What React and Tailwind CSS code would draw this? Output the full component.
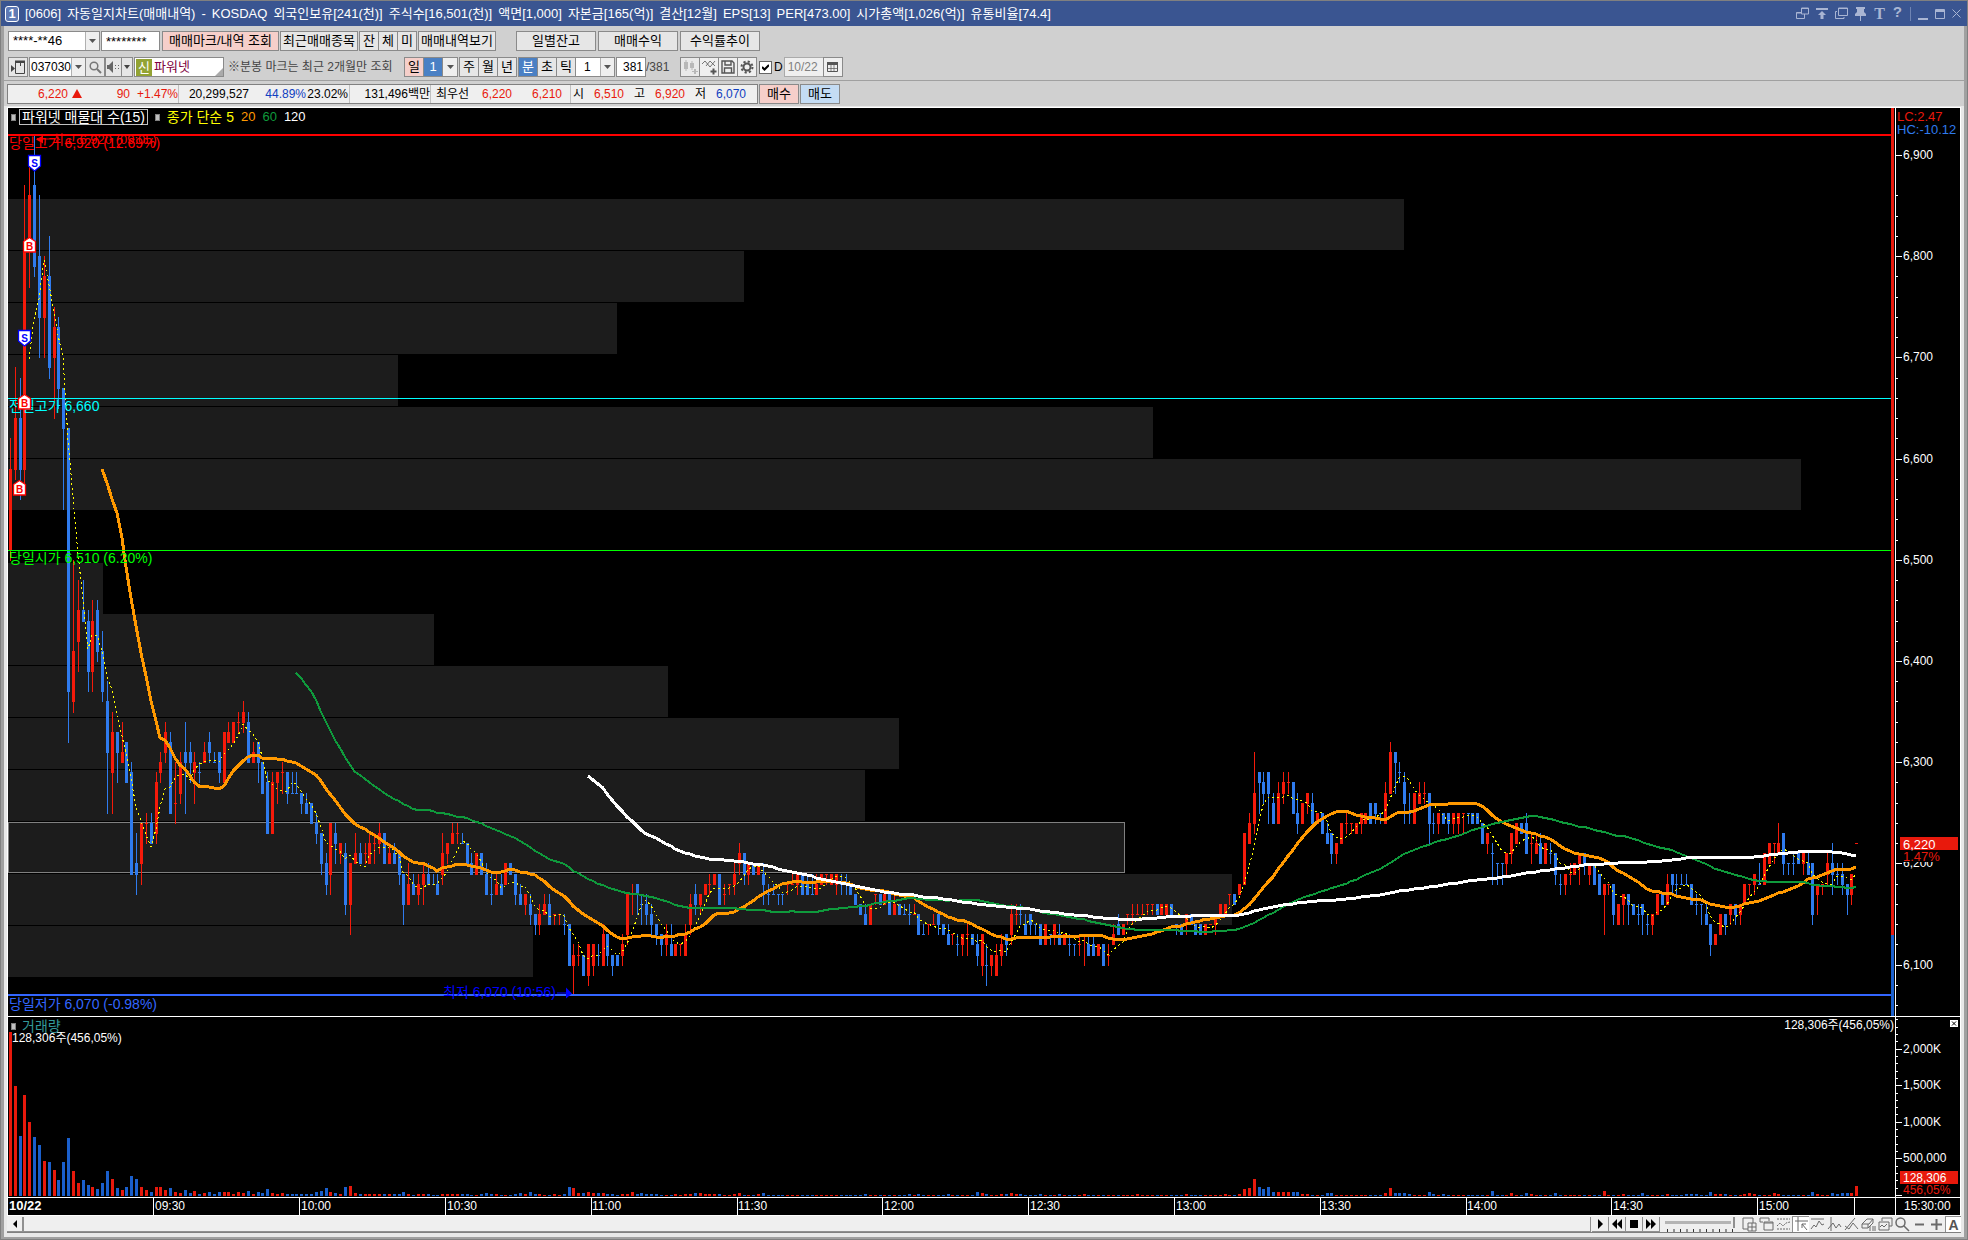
import { useState } from "react";
import clsx from "clsx";

// one minute candles: direction (u/d) + high, body top, body bottom, low in 10 won over 6,000
const CANDLES = `
u62595150 u69645958 d68645956 u87815957 u89868177 d92877978 d86807470 u80787470 d82786968 u75737064
d74736765 d67676355 d63633732 u50413635 u48454239 d48454444 d45443937 u46443937 d46454140 d43413736
d38363125 u35332925 d33333128 u34313030 d32322828 d30291919 d23201917 u24242018 u25242422 d25242222
u29282322 u31302928 u34333130 d33322525 u30262624 u31302726 d34313025 d32313028 u31302926 d30292928
u32313030 d33323130 d31303030 d31312928 u33332828 u34333232 u34343232 u35343433 u36353433 d35343030
u32313030 d32323028 d30302727 d29282323 u29282323 u29292826 u30292927 d29292726 d29272727 d29272727
d27272625 d27262525 d26262424 d25242322 d23232019 d21201817 u24241917 d24232220 u22222120 d22211615
u20201613 u23212020 d22212020 u22212120 u23222020 u23222220 u24232221 d23232020 u22212020 d22212020
d21211918 d19191614 u20181616 d19181717 u19181716 u20191816 d20191818 d19181818 d19181717 u23211918
u22222120 u24232222 u24232322 d23222222 d22222020 d21201919 u21211919 d21211919 d20191717 d19171716
u19181717 d19181717 u20201818 d20201919 d19191716 d18171616 u17171615 d17161514 d15151413 u16151413
u17161515 d17161414 u15151514 u15151514 d15141413 d14141010 u12111007 u12111110 d11110909 u12120908
u12121009 d12111110 u14131010 d13131110 d11111009 d11111010 u13121110 u17171312 u18171715 d18181715
d17161614 d17161514 d16151413 d14141312 d13131211 u14131211 d14121111 u12121111 u12121211 u14131111
u17161413 d18171615 u17171615 u18181717 u19181817 u19191818 d19191616 u18171716 u18181817 u20191817
u22212019 d21211918 u20201918 d20201919 u20201919 d20191816 d18171716 d18171717 d17171716 d17171716
u18181817 u19181818 u19191817 d19191717 d19181717 d19171717 u19181717 u19191818 u19191918 u19191818
u19191817 d19181817 d19181817 d18181717 d17171616 d16161515 d16151414 u16161414 u17171716 d17171616
u17171616 d17171515 u17161515 d16161515 d16151515 d16151514 u16151515 d15151313 d14131313 u14141413
u15141414 d15151413 d14141313 d14131212 u13131312 d13121211 u13131211 u14131311 d13131212 d13121110
u13131009 d12101008 u11111009 u12110909 u13121110 d13131211 u16151312 u16151514 d16151514 d15141313
d15151413 d14141413 d14141212 u14141212 d13131312 u14141312 d14131212 u13131212 d13121211 d12121211
u13121211 u13131310 d13121111 d13121111 u12121111 d12121010 u12111110 u14131212 d15141313 u14141313
u15151514 u16151514 u16151515 u16151515 u16161615 u16161615 d16161515 u16161515 u16161515 d16161515
d14141413 d14141313 u15151413 d15151414 d14141313 d14141313 u14141313 u14141414 u15151413 u16161515
u16161515 u17171716 d17171616 u18181717 u23231818 u25242222 u31272423 d29292825 d29282726 d29292724
d27262424 u28272424 u29282726 u29282827 d28282525 d27252423 u26262424 u27272625 d27262424 u25252424
d25252323 d24232222 d23232120 u22222120 u24242222 u25242423 u24242423 u24242323 u25252423 u25252424
d26262424 d26262524 d25252524 u28272424 u32312727 d31313027 d30292928 d29282624 d27252524 u27272424
u28272626 u28272726 d27272422 d25242423 u25252423 d25252424 d25252423 u25252423 u25252423 u25252523
d25252524 d25252424 d25252424 d24242222 u23232221 d22212118 d20202018 d20202018 u21212019 u23232120
u24242222 d24242323 d25242121 u23222220 u23222121 d23222020 u22222020 d22212120 d21211918 d19181817
u19191817 u20191918 u20201919 u21212018 d21212019 u20201918 d20201818 d19191717 u18181713 u18181817
d18181514 u16161414 u17171614 d17171614 d16161515 d16151514 d16161513 d15141413 u15151413 u17171515
d17171616 u19181616 d19191817 d19181817 d19181818 d19181818 d18181616 d17161615 d16161614 d16151414
d14141211 u13131212 u15151313 d15151413 u16161514 d16161514 u16161514 u18181616 u18181817 u19191817
d20181818 u21211818 u22222020 u22222220 u24222121 d23232019 d20202019 d21202019 d21212020 u21212019
d21201919 d20201514 u18181715 u18181817 u21201918 d22201917 d20191918 d20191817 d18181715 u19191716
u22222222`
  .trim()
  .split(/\s+/)
  .map((s) => ({
    up: s[0] === "u",
    high: +s.slice(1, 3),
    top: +s.slice(3, 5),
    bottom: +s.slice(5, 7),
    low: +s.slice(7, 9),
  }));

// volume in units of 13.6k shares, minutes not listed stay at one unit
const OPENING_VOLUME = [
  164, 110, 60, 101, 74, 59, 51, 35, 34, 26, 16, 34, 58, 25, 13, 16, 11, 9, 7, 13, 25, 17, 8, 6, 9, 20, 17, 9, 6, 4,
  9, 9, 6, 8, 4, 3, 6, 3, 5, 2, 3, 4, 2, 4, 4, 4, 2, 4, 3, 5, 2, 4, 3, 7, 3, 2, 3, 2, 2, 2,
  2, 2, 2, 4, 5, 8, 4, 3, 2, 9, 10, 3, 2, 2, 2, 2, 2, 2, 2, 2, 2, 4, 2, 1, 2, 2, 2, 1, 1, 2,
  2, 2, 2, 2, 2, 1, 1, 2, 3, 2, 2, 1, 1, 1, 2, 3, 2, 4, 2, 2, 1, 1, 2, 1, 2, 9, 8, 3, 3, 4,
  3, 3, 3, 2, 2, 1, 2, 2, 4, 2, 3, 2, 2, 2, 1, 1, 1, 2, 1, 2, 2, 3, 3, 2, 2, 2, 2, 1, 1, 2, 3,
];
const VOLUME_SPIKES = {
  154: 2, 155: 3, 176: 2, 185: 2, 187: 2, 193: 2, 199: 4, 200: 3, 201: 2, 204: 2, 205: 2, 206: 3, 207: 2, 208: 2,
  212: 2, 216: 2, 221: 2, 232: 2, 242: 2, 250: 2, 253: 2, 254: 7, 255: 8, 256: 17, 257: 9, 258: 7, 259: 9, 260: 4,
  261: 4, 262: 4, 263: 4, 264: 4, 265: 4, 266: 2, 267: 2, 271: 3, 272: 3, 283: 3, 284: 8, 285: 3, 286: 3, 287: 3,
  288: 2, 292: 4, 293: 2, 295: 2, 305: 5, 309: 3, 312: 3, 313: 2, 318: 3, 328: 5, 332: 2, 336: 3, 341: 2, 345: 2,
  346: 2, 347: 2, 350: 4, 351: 2, 352: 2, 353: 2, 357: 2, 358: 3, 359: 2, 363: 3, 364: 2, 371: 4, 372: 2, 375: 3,
  376: 2, 377: 3, 378: 3, 379: 3, 380: 10,
};

const PROFILE = [1396, 736, 609, 390, 1145, 1793, 0, 95, 426, 660, 891, 857, 1116, 1224, 525];
const PROFILE_CURRENT = 12;
const HOURS = ["09:30", "10:00", "10:30", "11:00", "11:30", "12:00", "12:30", "13:00", "13:30", "14:00", "14:30", "15:00"];

const RED = "#f51a0a";
const BLUE = "#2f7bee";

const barX = (i) => Math.floor(2.3 + i * 4.859) - 1;
const priceY = (p) => Math.round(887 - (p - 6070) * 1.0121);
const candleY = (v) => priceY(6000 + v * 10);

function average(period) {
  const closes = CANDLES.map((c) => (c.up ? c.top : c.bottom));
  const points = [];
  for (let i = period - 1; i < closes.length; i++) {
    let sum = 0;
    for (let j = 0; j < period; j++) sum += closes[i - j];
    points.push(`${barX(i) + 1},${candleY(sum / period)}`);
  }
  return points.join(" ");
}

/* ---------- small controls ---------- */

const box = "border border-[#8a8a8a] flex items-center justify-center";

function Btn({ className, children, ...rest }) {
  return (
    <button type="button" className={clsx(box, "h-5 shrink-0 whitespace-nowrap", className)} {...rest}>
      {children}
    </button>
  );
}

function Arrow() {
  return (
    <span className="w-[14px] h-full shrink-0 bg-[#efefef] border-l border-[#b0b0b0] flex items-center justify-center pointer-events-none">
      <svg width="7" height="4" viewBox="0 0 7 4" fill="#555">
        <path d="M0 0h7L3.5 4z" />
      </svg>
    </span>
  );
}

function Combo({ label, value, className, fieldClass = "pl-1" }) {
  return (
    <label className={clsx(box, "h-5 shrink-0 bg-white", className)}>
      <select aria-label={label} className={clsx("appearance-none flex-1 min-w-0 h-full outline-none", fieldClass)}>
        <option>{value}</option>
      </select>
      <Arrow />
    </label>
  );
}

/* ---------- bars above the chart ---------- */

function TitleBar() {
  const parts = [
    "[0606]", "자동일지차트(매매내역)", "-", "KOSDAQ", "외국인보유[241(천)]", "주식수[16,501(천)]", "액면[1,000]",
    "자본금[165(억)]", "결산[12월]", "EPS[13]", "PER[473.00]", "시가총액[1,026(억)]", "유통비율[74.4]",
  ];
  return (
    <header className="h-[25px] bg-[#3a5591] text-white flex items-center pl-1">
      <span className="w-[14px] h-4 rounded-[3px] border border-white bg-[#5f7ab5] text-[13px] leading-[14px] font-bold text-center mr-[6px]">
        1
      </span>
      <h1 className="flex gap-[6px] text-[13px] leading-5 whitespace-nowrap">
        {parts.map((p) => (
          <span key={p}>{p}</span>
        ))}
      </h1>
      <div className="ml-auto mr-[6px] flex items-center gap-[7px] text-[#a9b5d3]">
        <button type="button" aria-label="창 분리">
          <svg width="13" height="13" viewBox="0 0 13 13" fill="none" stroke="currentColor">
            <path d="M5.5 1h7v6h-7zM5 1.5h8M8.5 7v4.500h-8v-6h5M.5 6h5" />
          </svg>
        </button>
        <button type="button" aria-label="맨 위로">
          <svg width="12" height="12" viewBox="0 0 12 12" fill="currentColor">
            <path d="M0 0h12v2H0zM6 3l4 4H7.500v4h-3V7H2z" />
          </svg>
        </button>
        <button type="button" aria-label="창 복사">
          <svg width="13" height="13" viewBox="0 0 13 13" fill="none" stroke="currentColor">
            <path d="M3.500 1h9v7.500h-9zM3 1.500h10M2 4.500H.5v7h8.500V10" />
          </svg>
        </button>
        <button type="button" aria-label="고정">
          <svg width="12" height="14" viewBox="0 0 12 14" fill="currentColor">
            <path d="M1 0h9v2H9v3l2 2v2H0V7l2-2V2H1zM5 9h1v5H5z" />
          </svg>
        </button>
        <button type="button" className="w-[11px] font-['Liberation_Serif',serif] font-bold text-[16px] leading-5">T</button>
        <button type="button" className="w-[11px] font-['Liberation_Mono',monospace] font-bold text-[15px] leading-5">?</button>
        <span className="w-px h-[14px] bg-[#6f84b3]" />
        <button type="button" aria-label="최소화">
          <svg width="10" height="12" fill="currentColor"><path d="M0 10h10v2H0z" /></svg>
        </button>
        <button type="button" aria-label="최대화">
          <svg width="10" height="10" fill="none" stroke="currentColor"><path d="M.5.5h9v9h-9zM0 1.500h10M0 2.500h10" /></svg>
        </button>
        <button type="button" aria-label="닫기">
          <svg width="9" height="9" stroke="currentColor"><path d="M.5.5l8 8M8.500.5l-8 8" /></svg>
        </button>
      </div>
    </header>
  );
}

function AccountRow() {
  return (
    <div className="flex h-[25px] items-end pl-1">
      <Combo label="계좌번호" value="****-**46" className="w-[92px]" />
      <input
        aria-label="비밀번호"
        defaultValue="********"
        className="h-5 w-[59px] ml-px border border-[#8a8a8a] bg-white pl-1 outline-none"
      />
      <Btn className="w-[117px] ml-[2px] bg-[#f6cfca]">매매마크/내역 조회</Btn>
      <Btn className="w-[78px] ml-px bg-[#e6e6e6]">최근매매종목</Btn>
      <div className="flex ml-px">
        <Btn className="w-5 bg-[#e6e6e6]">잔</Btn>
        <Btn className="w-5 -ml-px bg-[#e6e6e6]">체</Btn>
        <Btn className="w-5 -ml-px bg-[#e6e6e6]">미</Btn>
      </div>
      <Btn className="w-[78px] ml-px bg-[#e6e6e6]">매매내역보기</Btn>
      <div className="flex gap-[2px] ml-5">
        <Btn className="w-20 bg-[#e6e6e6]">일별잔고</Btn>
        <Btn className="w-20 bg-[#e6e6e6]">매매수익</Btn>
        <Btn className="w-20 bg-[#e6e6e6]">수익률추이</Btn>
      </div>
    </div>
  );
}

function SymbolRow() {
  const [daily, setDaily] = useState(true);
  return (
    <div className="flex h-[26px] items-end pl-1">
      <Btn className="w-5 bg-[#e6e6e6]" aria-label="종목 목록">
        <svg width="14" height="14" viewBox="0 0 14 14" fill="none" stroke="#444">
          <path d="M4.500 1v12.500h9V1M4 2.500h10M9.500 3v3" />
          <path d="M4 1.500h10" strokeWidth="2" />
          <path d="M0 5l4 3.500L0 12z" fill="#444" stroke="none" />
        </svg>
      </Btn>
      <Combo label="종목코드" value="037030" className="w-[57px] ml-px text-xs" fieldClass="pl-px" />
      <Btn className="w-5 -ml-px bg-[#e6e6e6]" aria-label="검색">
        <svg width="13" height="13" viewBox="0 0 13 13" fill="none" stroke="#777" strokeWidth="1.500">
          <circle cx="5" cy="5" r="3.800" />
          <path d="M8 8l4 4" strokeWidth="2" />
        </svg>
      </Btn>
      <Btn className="w-[17px] bg-[#e6e6e6]" aria-label="음성">
        <svg width="13" height="12" viewBox="0 0 13 12" fill="#666">
          <path d="M0 4h2l4-4v12L2 8H0zM8 4h1v1H8zM8 7h1v1H8zM11 4h1v1h-1zM11 7h1v1h-1z" />
        </svg>
      </Btn>
      <Btn className="w-[12px] -ml-px bg-[#e6e6e6]" aria-label="음성 설정">
        <svg width="6" height="4" fill="#444"><path d="M0 0h6L3 4z" /></svg>
      </Btn>
      <div className="h-5 w-[90px] ml-px border border-[#8a8a8a] bg-white flex items-center relative">
        <span className="bg-[#93a334] text-white w-4 h-[17px] ml-px leading-[17px] text-center">신</span>
        <span className="ml-[2px] text-[#800040]">파워넷</span>
        <svg className="absolute right-0 bottom-0" width="8" height="8" fill="#aaa"><path d="M8 0v8H0z" /></svg>
      </div>
      <p className="h-5 leading-5 ml-1 w-[176px] text-xs text-[#444] whitespace-nowrap">※분봉 마크는 최근 2개월만 조회</p>
      <div className="flex">
        <Btn className="w-5 bg-[#f6cfca]">일</Btn>
        <Btn className="w-5 -ml-px bg-[#4a80c4] text-white">1</Btn>
        <Btn className="w-4 -ml-px bg-[#efefef]" aria-label="일수 선택">
          <svg width="7" height="4" fill="#555"><path d="M0 0h7L3.500 4z" /></svg>
        </Btn>
      </div>
      <div className="flex ml-px">
        <Btn className="w-5 bg-[#e6e6e6]">주</Btn>
        <Btn className="w-5 -ml-px bg-[#e6e6e6]">월</Btn>
        <Btn className="w-5 -ml-px bg-[#e6e6e6]">년</Btn>
      </div>
      <div className="flex ml-px">
        <Btn className="w-5 bg-[#4a80c4] text-white">분</Btn>
        <Btn className="w-5 -ml-px bg-[#e6e6e6]">초</Btn>
        <Btn className="w-5 -ml-px bg-[#e6e6e6]">틱</Btn>
        <Combo label="분 단위" value="1" className="w-10 -ml-px text-xs" fieldClass="pl-2" />
      </div>
      <input aria-label="봉 개수" defaultValue="381" className="h-5 w-[30px] ml-px border border-[#8a8a8a] bg-white text-xs text-right pr-[2px] outline-none" />
      <span className="h-5 leading-5 w-[34px] text-xs text-[#444]">/381</span>
      <div className="flex">
        <Btn className="w-5 bg-[#e9e9e9]" aria-label="봉 추가">
          <svg width="15" height="15" viewBox="0 0 15 15" fill="#b8b8b8">
            <path d="M1 2h4v7H1zM2.500 0h1v11h-1zM7 3h4v5H7zM8.500 1h1v9h-1zM11 9h2v2h2v1h-2v2h-2v-2H9v-1h2z" />
          </svg>
        </Btn>
        <Btn className="w-5 -ml-px bg-[#efefef]" aria-label="지표 추가">
          <svg width="15" height="15" viewBox="0 0 15 15" fill="none" stroke="#555">
            <path d="M0 4l3-3 5 6 5-6M4 6l4-5 5 5" strokeWidth=".8" />
            <path d="M11.500 8.500v6M8.500 11.500h6" strokeWidth="2" />
          </svg>
        </Btn>
        <Btn className="w-5 -ml-px bg-[#efefef]" aria-label="저장">
          <svg width="14" height="14" viewBox="0 0 14 14" fill="none" stroke="#555" strokeWidth="1.400">
            <path d="M1 1h10l2 2v10H1zM4 1v4h6V1M3.500 13V8h7v5" />
          </svg>
        </Btn>
        <Btn className="w-5 -ml-px bg-[#efefef]" aria-label="설정">
          <svg width="14" height="14" viewBox="0 0 14 14" fill="none" stroke="#555">
            <circle cx="7" cy="7" r="3.500" strokeWidth="2" />
            <circle cx="7" cy="7" r="5.500" strokeWidth="2" strokeDasharray="2.200 2.120" />
          </svg>
        </Btn>
      </div>
      <label className="h-5 ml-[2px] flex items-center gap-[2px] text-xs">
        <span className="relative w-[13px] h-[13px] flex">
          <input
            type="checkbox"
            checked={daily}
            onChange={(e) => setDaily(e.target.checked)}
            className="appearance-none w-[13px] h-[13px] bg-white border border-[#666]"
          />
          {daily && (
            <svg className="absolute left-[3px] top-[3px] pointer-events-none" width="7" height="7" fill="none" stroke="#000" strokeWidth="2">
              <path d="M0 3l2.500 2.500L7 1" />
            </svg>
          )}
        </span>
        D
      </label>
      <input aria-label="기준일" defaultValue="10/22" className="h-5 w-10 ml-px border border-[#aaa] bg-[#efefef] text-xs text-[#808080] pl-[3px] outline-none" />
      <Btn className="w-5 -ml-px bg-[#efefef]" aria-label="달력">
        <svg width="11" height="10" viewBox="0 0 11 10" fill="none" stroke="#555">
          <path d="M.5.5h10v9H.5z" />
          <path d="M0 1.500h11" strokeWidth="3" />
          <path d="M4 3v7M7 3v7M0 6.500h11" strokeWidth=".7" />
        </svg>
      </Btn>
    </div>
  );
}

function QuoteRow() {
  const red = "text-[#e8190c]";
  const blue = "text-[#1040c0]";
  const cell = "flex items-center h-full border-r border-[#c0c0c0]";
  return (
    <div className="flex h-[26px] items-center border-t border-[#a0a0a0] pl-[3px]">
      <div className="flex h-5 w-[751px] border border-[#808080] bg-[#efefef] text-xs text-right whitespace-nowrap">
        <div className={clsx(cell, "w-[171px]", red)}>
          <span className="w-[60px]">6,220</span>
          <svg className="ml-1" width="10" height="9" fill="#e8190c"><path d="M5 0l5 9H0z" /></svg>
          <span className="w-12">90</span>
          <span className="w-[48px]">+1.47%</span>
        </div>
        <div className={clsx(cell, "w-[171px]")}>
          <span className="w-[70px]">20,299,527</span>
          <span className={clsx("w-[57px]", blue)}>44.89%</span>
          <span className="w-[42px]">23.02%</span>
        </div>
        <div className={clsx(cell, "w-[81px] justify-end")}>131,496백만</div>
        <div className={clsx(cell, "w-[140px]")}>
          <span className="w-[38px]">최우선</span>
          <span className={clsx("w-[43px]", red)}>6,220</span>
          <span className={clsx("w-[50px]", red)}>6,210</span>
        </div>
        <div className="flex items-center">
          <span className="w-[13px]">시</span>
          <span className={clsx("w-10", red)}>6,510</span>
          <span className="w-[21px]">고</span>
          <span className={clsx("w-10", red)}>6,920</span>
          <span className="w-[21px]">저</span>
          <span className={clsx("w-10", blue)}>6,070</span>
        </div>
      </div>
      <Btn className="w-10 ml-px bg-[#f6cfca]">매수</Btn>
      <Btn className="w-10 ml-px bg-[#c4dcf4]">매도</Btn>
    </div>
  );
}

/* ---------- chart ---------- */

function Mark({ type, x, y }) {
  const color = type === "B" ? "#ff0000" : "#0000ff";
  return (
    <g>
      <path
        d={type === "B" ? `M${x} ${y - 7.500}l6 4v10.500h-12v-10.500z` : `M${x} ${y + 8}l6-5v-10.500h-12v10.500z`}
        fill="#fff"
        stroke={color}
        strokeWidth="1.300"
      />
      <text x={x} y={type === "B" ? y + 5 : y + 4} fill={color} fontSize="10" fontWeight="bold" textAnchor="middle">
        {type}
      </text>
    </g>
  );
}

function PriceChart() {
  const levels = [
    [6920, "#ff0000", 2],
    [6660, "#00ffff", 1],
    [6510, "#00ff00", 1],
    [6070, "#3366ff", 2],
  ];
  return (
    <svg className="flex-1 min-w-0 h-[908px] text-[14px]">
      <g shapeRendering="crispEdges">
        {PROFILE.map((w, i) => (
          <rect key={i} x="0" y={Math.round(91 + i * 51.93)} width={w} height="51" fill="#1c1c1c" />
        ))}
        <rect x="0.500" y={Math.round(91 + PROFILE_CURRENT * 51.93) + 0.5} width={PROFILE[PROFILE_CURRENT]} height="50" fill="none" stroke="#808080" />
        {CANDLES.map((c, i) => (
          <g key={i} fill={c.up ? RED : BLUE}>
            <rect x={barX(i) + 1} y={candleY(c.high)} width="1" height={candleY(c.low) - candleY(c.high) + 1} />
            <rect x={barX(i)} y={candleY(c.top)} width="3" height={candleY(c.bottom) - candleY(c.top) + 1} />
          </g>
        ))}
        <g fill="none">
          <polyline points={average(5)} stroke="#ffff00" strokeDasharray="2 3" />
          <polyline points={average(20)} stroke="#ff9900" strokeWidth="3" />
          <polyline points={average(60)} stroke="#0f9a3c" strokeWidth="2" />
          <polyline points={average(120)} stroke="#ffffff" strokeWidth="3" />
        </g>
        {levels.map(([price, color, w]) => (
          <rect key={price} x="0" y={priceY(price) + 1 - w} width="100%" height={w} fill={color} />
        ))}
      </g>
      <text x="1" y="40" fill="#ff0000">당일고가 6,920 (12.69%)</text>
      <text x="44" y="36" fill="#ff0000" className="text-[13px]">최고 6,920 (09:05)</text>
      <path d="M28 31.500l7-4v3h10v1h-10v4z" fill="#ff0000" />
      <text x="1" y="303" fill="#00ffff">전일고가 6,660</text>
      <text x="1" y="455" fill="#00ff00">당일시가 6,510 (6.20%)</text>
      <text x="1" y="901" fill="#3366ff">당일저가 6,070 (-0.98%)</text>
      <text x="435" y="889" fill="#0000ff">최저 6,070 (10:56)</text>
      <path d="M564 885.500l-6-6v5h-9v1h9v5z" fill="#0000ff" />
      <Mark type="S" x={26.5} y={55} />
      <Mark type="B" x={21.5} y={137} />
      <Mark type="S" x={16.5} y={230} />
      <Mark type="B" x={16.5} y={294} />
      <Mark type="B" x={11.5} y={380} />
    </svg>
  );
}

function PriceAxis() {
  const minors = [];
  for (let p = 6060; p <= 6860; p += 20) if (p % 100) minors.push(p);
  return (
    <svg className="w-[65px] h-[908px] shrink-0 border-l border-white text-xs" fill="#fff">
      {minors.map((p) => (
        <rect key={p} x="0" y={priceY(p)} width="2" height="1" />
      ))}
      {[6100, 6200, 6300, 6400, 6500, 6600, 6700, 6800, 6900].map((p) => (
        <g key={p}>
          <rect x="0" y={priceY(p)} width="6" height="1" />
          <text x="7" y={priceY(p) + 4}>{p.toLocaleString("en-US")}</text>
        </g>
      ))}
      <g className="text-[13px]">
        <text x="1" y="13" fill="#e8190c">LC:2.47</text>
        <text x="1" y="26" fill={BLUE}>HC:-10.12</text>
        <rect x="6" y="742" width="54" height="12" fill="#000" />
        <rect x="4" y="729" width="58" height="13" fill="#e8190c" />
        <text x="7" y="741">6,220</text>
        <text x="7" y="753" fill="#e8190c">1.47%</text>
      </g>
    </svg>
  );
}

function VolumeChart() {
  return (
    <svg className="flex-1 min-w-0 h-[180px]" shapeRendering="crispEdges">
      {CANDLES.map((c, i) => {
        const h = OPENING_VOLUME[i] ?? VOLUME_SPIKES[i] ?? 1;
        return <rect key={i} x={barX(i)} y={179 - h} width="3" height={h} fill={c.up ? "#e8190c" : "#1a5fcc"} />;
      })}
    </svg>
  );
}

function VolumeAxis() {
  const ticks = Array.from({ length: 25 }, (_, i) => i);
  const labels = { 5: "500,000", 10: "1,000K", 15: "1,500K", 20: "2,000K" };
  return (
    <svg className="w-[65px] h-[180px] shrink-0 border-l border-white text-xs" fill="#fff">
      {ticks.map((t) => (
        <rect key={t} x="0" y={Math.round(178 - t * 7.32)} width={t % 5 ? 2 : 6} height="1" />
      ))}
      {Object.entries(labels).map(([t, label]) => (
        <text key={t} x="7" y={Math.round(178 - t * 7.32) + 4}>{label}</text>
      ))}
      <rect x="4" y="154" width="58" height="13" fill="#e8190c" />
      <text x="7" y="165">128,306</text>
      <text x="7" y="177" fill="#e8190c">456,05%</text>
      <rect x="54" y="3" width="8" height="7" />
      <path d="M56 4.500l4 4M60 4.500l-4 4" stroke="#000" />
    </svg>
  );
}

function Dot() {
  return <span className="w-[5px] h-[7px] bg-[#c0c0c0] border border-[#808080]" />;
}

function ChartArea() {
  return (
    <main className="bg-black border-l border-t border-r border-white text-white">
      <section aria-label="주가 차트" className="relative flex border-b border-white">
        <PriceChart />
        <div className="w-[3px] mr-px shrink-0 flex flex-col">
          <div className="h-[827px] bg-[#e8190c]" />
          <div className="flex-1 bg-[#1a5fcc]" />
        </div>
        <PriceAxis />
        <div className="absolute left-[3px] top-px flex items-center gap-[3px] text-[14px] leading-4 whitespace-nowrap">
          <Dot />
          <span className="border border-[#c0c0c0] px-[2px] h-4 leading-[14px]">파워넷 매물대 수(15)</span>
          <span className="ml-1 mr-1 flex"><Dot /></span>
          <span className="text-[#ffff00]">종가 단순 5</span>
          <span className="ml-1 text-[13px] text-[#ff9900]">20</span>
          <span className="ml-1 text-[13px] text-[#0f9a3c]">60</span>
          <span className="ml-1 text-[13px]">120</span>
        </div>
      </section>
      <section aria-label="거래량 차트" className="relative flex border-b border-white">
        <VolumeChart />
        <VolumeAxis />
        <div className="absolute left-[3px] top-px flex items-center gap-[6px] text-[14px] leading-4 text-[#339999]">
          <Dot />
          거래량
        </div>
        <p className="absolute left-[4px] top-[13px] text-xs leading-4">128,306주(456,05%)</p>
        <p className="absolute right-[66px] top-0 text-xs leading-4">128,306주(456,05%)</p>
      </section>
      <div className="flex border-b border-white text-xs">
        <svg className="flex-1 min-w-0 h-[17px]" fill="#fff">
          <text x="1" y="12" fontWeight="bold" className="text-[13px]">10/22</text>
          {HOURS.map((h, i) => (
            <g key={h}>
              <rect x={Math.round(145.4 + i * 145.8)} y="0" width="1" height="17" />
              <text x={Math.round(147 + i * 145.8)} y="12">{h}</text>
            </g>
          ))}
          <rect x="1846" y="0" width="1" height="17" />
        </svg>
        <div className="w-[65px] shrink-0 border-l border-white pl-2 leading-4">15:30:00</div>
      </div>
    </main>
  );
}

/* ---------- bottom strip ---------- */

const TOOLS = [
  ["새 차트", <path key="a" d="M1 1h10v5M1 1v11h5M6 6h8v8H6zM10 6v8M6 10h8" />],
  ["차트 복사", <path key="a" d="M4 5H1V1h9v3M5 5h9v8H5zM5 6h9" />],
  ["영역 선택", <path key="a" d="M1 2h13M1 12h13M1 9l3-3 3 3 3-3 4-1" strokeDasharray="2 1" />],
  ["십자선", <path key="a" d="M1 4h13M4 0v14M8 7l5 6M8 7h4M8 7v4" />],
  ["고가선", <path key="a" d="M1 2h13M1 12l3-4 2 2 3-6 3 4 2-1" />],
  ["세로선", <path key="a" d="M4 0v14M1 12l5-6 3 5 3-4 2 3" />],
  ["추세선", <path key="a" d="M1 13L11 1M1 9l4 3 4-6 5 6" />],
  ["모두 지우기", <path key="a" d="M1 7l5-5h6l-4 5zM1 7v4h6l5-5V2M7 11V7M9 9v5M12 9v5M14 9v5" />],
  ["저장 차트", <path key="a" d="M4 4V1h10v8h-3M1 5h10v8H1zM2 10l2-2 2 2 3-3" />],
  ["돋보기", <path key="a" d="M10 5.500a4.500 4.500 0 1 1-9 0a4.500 4.500 0 1 1 9 0M9 9l5 5" strokeWidth="1.500" />],
  ["축소", <path key="a" d="M3 7.500h9" strokeWidth="2" />],
  ["확대", <path key="a" d="M2 7.500h11M7.500 2v11" strokeWidth="2" />],
];

function BottomBar() {
  const play = [
    ["재생", "M3 0l5 5-5 5z"],
    ["뒤로", "M5 0v10L0 5zM10 0v10L5 5z"],
    ["정지", "M1 1h8v8H1z"],
    ["앞으로", "M0 0l5 5-5 5zM5 0l5 5-5 5z"],
  ];
  const raised = "h-[15px] bg-[#efefef] border-r border-b border-[#909090] flex items-center justify-center shrink-0";
  return (
    <footer className="flex h-[17px] items-center border-b border-[#808080] bg-[#efefef]">
      <button type="button" aria-label="왼쪽으로" className={clsx(raised, "w-4")}>
        <svg width="4" height="8"><path d="M4 0v8L0 4z" /></svg>
      </button>
      <div className="flex-1 h-[15px] bg-[#efefef] border-l border-b border-r border-[#909090]" />
      <div className="flex ml-px">
        {play.map(([name, d]) => (
          <button key={name} type="button" aria-label={name} className={clsx(raised, "w-[17px]")}>
            <svg width="10" height="10"><path d={d} /></svg>
          </button>
        ))}
      </div>
      <div className="w-[70px] ml-[5px] flex flex-col">
        <input
          type="range"
          aria-label="재생 속도"
          defaultValue="100"
          className="appearance-none w-full h-3 bg-transparent [&::-webkit-slider-runnable-track]:h-[3px] [&::-webkit-slider-runnable-track]:bg-[#b4b4b4] [&::-webkit-slider-thumb]:appearance-none [&::-webkit-slider-thumb]:w-1 [&::-webkit-slider-thumb]:h-[11px] [&::-webkit-slider-thumb]:-mt-1 [&::-webkit-slider-thumb]:bg-[#efefef] [&::-webkit-slider-thumb]:border-r-2 [&::-webkit-slider-thumb]:border-[#909090]"
        />
        <svg className="w-full h-[3px]">
          <path d="M2 1.500h68" stroke="#333" strokeWidth="3" strokeDasharray="1 5.500" />
        </svg>
      </div>
      <div className="flex ml-[6px]">
        {TOOLS.map(([name, icon]) => (
          <button
            key={name}
            type="button"
            aria-label={name}
            className={clsx("w-[17px] h-4 flex items-center justify-center", name === "십자선" && "bg-white border-l border-t border-[#909090]")}
          >
            <svg width="15" height="15" viewBox="0 0 15 15" fill="none" stroke="#6a6a6a">{icon}</svg>
          </button>
        ))}
        <button type="button" className="w-4 h-4 bg-white border-l border-t border-[#909090] text-[#555] font-bold text-[14px] leading-4">
          A
        </button>
      </div>
    </footer>
  );
}

export default function App() {
  return (
    <div className="min-h-screen bg-[#a0a0a0] border border-[#808080] text-black text-[13px] leading-[18px] font-['Liberation_Sans','Noto_Sans_CJK_KR',sans-serif]">
      <TitleBar />
      <div className="mx-[3px] bg-[#d0d0d0]">
        <AccountRow />
        <SymbolRow />
        <div className="h-[3px]" />
        <QuoteRow />
      </div>
      <div className="mx-[3px] px-[3px] pt-px pb-1 bg-[#e8e8e8]">
        <ChartArea />
        <BottomBar />
      </div>
    </div>
  );
}
